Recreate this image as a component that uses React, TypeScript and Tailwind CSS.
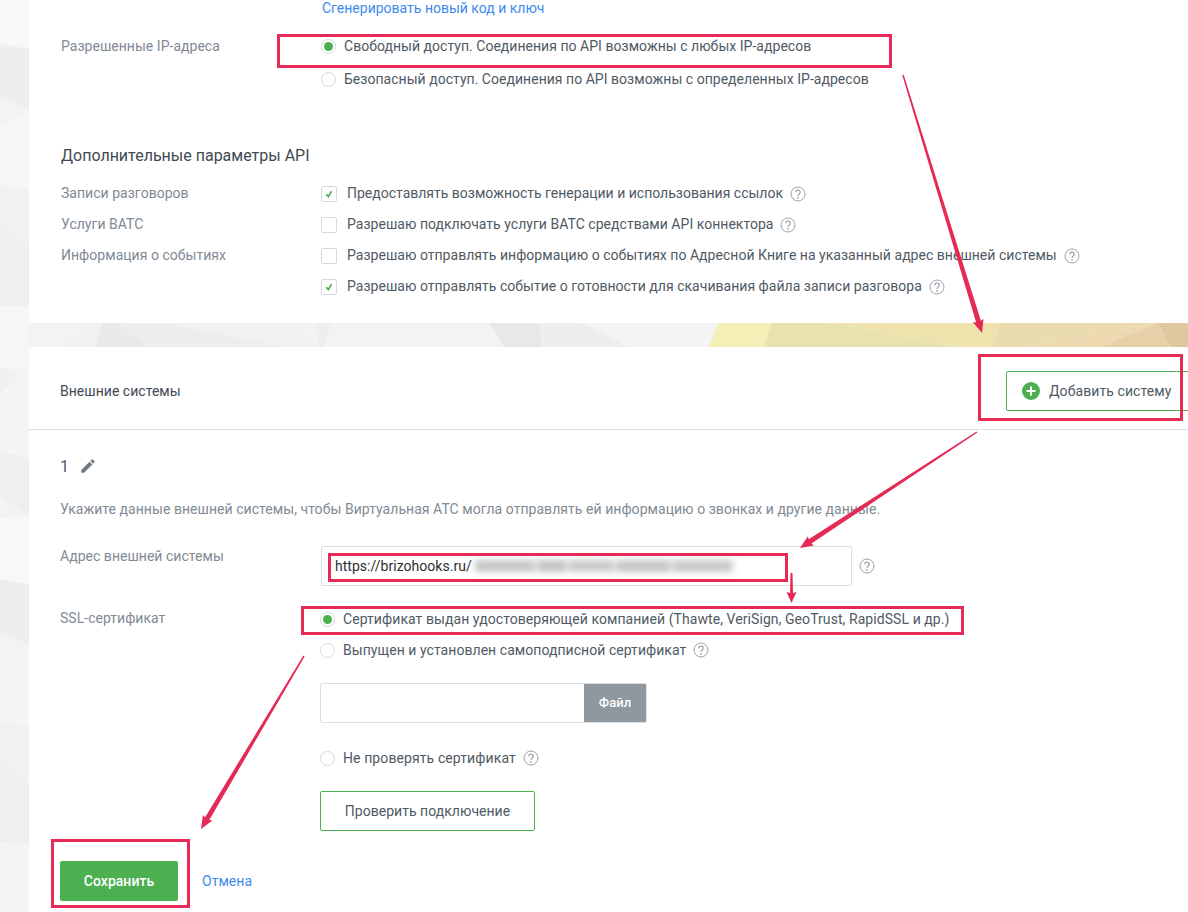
const font = { fontFamily: "Roboto, 'Open Sans', sans-serif" };

const RED = "#e42a55";

function Help({ className = "" }: { className?: string }) {
  return (
    <svg width="16" height="16" viewBox="0 0 16 16" fill="none" className={`shrink-0 ${className}`}>
      <circle cx="8" cy="8" r="7" stroke="#9aa3ab" strokeWidth="1" />
      <path d="M5.8 6.3C5.8 4.9 6.8 4 8 4s2.2.9 2.2 2.2C10.2 8 8 8.1 8 10" stroke="#8f989f" strokeWidth="1.1" fill="none" />
      <circle cx="8" cy="11.9" r=".8" fill="#8f989f" />
    </svg>
  );
}

function Radio({ on = false }: { on?: boolean }) {
  return (
    <span className="flex h-[15px] w-[15px] shrink-0 items-center justify-center rounded-full border border-[#d5dade] bg-white">
      {on && <span className="h-[9px] w-[9px] rounded-full bg-[#4caf50]" />}
    </span>
  );
}

function Check({ on = false }: { on?: boolean }) {
  return (
    <span className="flex h-4 w-4 shrink-0 items-center justify-center rounded-[2px] border border-[#d5dade] bg-white">
      {on && (
        <svg width="10" height="10" viewBox="0 0 10 10" fill="none">
          <path d="M2.4 5.2 4.3 7.6 7.6 2.2" stroke="#4caf50" strokeWidth="1.7" />
        </svg>
      )}
    </span>
  );
}

function OptionRow({ label, text, on, help, tight }: { label?: string; text: string; on?: boolean; help?: boolean; tight?: boolean }) {
  return (
    <div className="flex h-[31px] items-center">
      <div className="w-[260px] shrink-0 text-[#7f8a94]">{label}</div>
      <Check on={on} />
      <span className={`ml-[10px] text-[#4f5a64] ${tight ? "tracking-normal" : ""}`}>{text}</span>
      {help && <Help className="ml-[7px]" />}
    </div>
  );
}

function Gutter() {
  return (
    <svg width="29" height="912" viewBox="0 0 29 912" className="block">
      <rect width="29" height="912" fill="#f5f5f5" />
      <polygon points="0,0 29,0 29,49 0,44" fill="#f8f8f8" />
      <polygon points="0,44 29,49 29,110 0,96" fill="#eeeeee" />
      <polygon points="0,96 29,110 0,128" fill="#f3f3f3" />
      <polygon points="0,128 29,110 29,188 0,187" fill="#f6f6f6" />
      <polygon points="0,187 29,188 29,245 0,227" fill="#f1f1f1" />
      <polygon points="0,227 29,245 29,307 0,305" fill="#efefef" />
      <polygon points="0,305 29,307 29,370 0,367" fill="#f6f6f6" />
      <polygon points="0,367 20,376 0,395" fill="#f0f0f0" />
      <polygon points="0,395 29,373 29,458 0,452" fill="#f5f5f5" />
      <polygon points="0,452 29,458 29,517 0,495" fill="#efefef" />
      <polygon points="0,495 29,517 0,518" fill="#f3f3f3" />
      <polygon points="0,518 29,517 29,584 0,579" fill="#f8f8f8" />
      <polygon points="0,579 29,584 29,645 0,632" fill="#eeeeee" />
      <polygon points="0,632 29,645 0,663" fill="#f3f3f3" />
      <polygon points="0,663 29,645 29,725 0,722" fill="#f5f5f5" />
      <polygon points="0,722 29,725 29,785 0,762" fill="#f1f1f1" />
      <polygon points="0,762 29,785 29,844 0,842" fill="#efefef" />
      <polygon points="0,842 29,844 29,912 0,912" fill="#f4f4f4" />
    </svg>
  );
}

function Band() {
  return (
    <svg width="1159" height="24" viewBox="29 0 1159 24" className="block">
      <rect x="29" width="1159" height="24" fill="#f3f3f3" />
      <polygon points="60,24 102,0 96,24" fill="#f1f1f1" />
      <polygon points="102,0 117,0 148,24 96,24" fill="#e9e9e9" />
      <polygon points="117,0 163,0 284,24 148,24" fill="#ededed" />
      <polygon points="163,0 285,0 320,24 284,24" fill="#f1f1f1" />
      <polygon points="314,0 331,0 323,24 320,24" fill="#eeeeee" />
      <polygon points="489,0 539,0 542,24 504,24" fill="#e8e8e8" />
      <polygon points="539,0 583,0 629,24 542,24" fill="#eeeeee" />
      <polygon points="583,0 718,0 709,24 629,24" fill="#f4f4f4" />
      <polygon points="718,0 772,0 764,24 709,24" fill="#f5f0b8" />
      <polygon points="772,0 830,0 957,24 764,24" fill="#e8e2ae" />
      <polygon points="830,0 1000,0 992,24 957,24" fill="#eee3ad" />
      <polygon points="1000,0 1158,0 1025,24 992,24" fill="#ebdcb0" />
      <polygon points="1025,24 1158,0 1100,24" fill="#edd8b0" />
      <polygon points="1100,24 1158,0 1170,24" fill="#e5d0a8" />
      <polygon points="1158,0 1188,0 1188,24 1170,24" fill="#dfc8a0" />
    </svg>
  );
}

// arrow from a thin tail to a thick head, the way the screenshot tool draws it
function Arrow({ x1, y1, x2, y2, tail, neck, head, len }: { x1: number; y1: number; x2: number; y2: number; tail: number; neck: number; head: number; len: number }) {
  const d = Math.hypot(x2 - x1, y2 - y1);
  const ux = (x2 - x1) / d;
  const uy = (y2 - y1) / d;
  const nx = -uy;
  const ny = ux;
  const bx = x2 - ux * len;
  const by = y2 - uy * len;
  const pts = (list: number[][]) => list.map((p) => p.map((v) => v.toFixed(1)).join(",")).join(" ");
  return (
    <polygon
      fill={RED}
      points={pts([
        [x1 + (nx * tail) / 2, y1 + (ny * tail) / 2],
        [bx + (nx * neck) / 2, by + (ny * neck) / 2],
        [bx + (nx * head) / 2 - ux, by + (ny * head) / 2 - uy],
        [x2, y2],
        [bx - (nx * head) / 2 - ux, by - (ny * head) / 2 - uy],
        [bx - (nx * neck) / 2, by - (ny * neck) / 2],
        [x1 - (nx * tail) / 2, y1 - (ny * tail) / 2],
      ])}
    />
  );
}

function Annotations() {
  const boxes = [
    "left-[277px] top-[34px] h-[34px] w-[615px]",
    "left-[978px] top-[354px] h-[67px] w-[205px]",
    "left-[328px] top-[553px] h-[29px] w-[460px]",
    "left-[301px] top-[606px] h-[29px] w-[663px]",
    "left-[51px] top-[839px] h-[69px] w-[139px]",
  ];
  return (
    <>
      {boxes.map((b) => (
        <div key={b} className={`pointer-events-none absolute border-[3px] border-[#e42a55] ${b}`} />
      ))}
      <svg width="1188" height="912" viewBox="0 0 1188 912" className="pointer-events-none absolute left-0 top-0">
        <Arrow x1={903} y1={75} x2={982} y2={333} tail={1.5} neck={5} head={11} len={12} />
        <Arrow x1={977} y1={432} x2={800} y2={548} tail={1.5} neck={5} head={11} len={12} />
        <Arrow x1={791.5} y1={573} x2={791.5} y2={603} tail={2} neck={3} head={10} len={10} />
        <Arrow x1={304} y1={656} x2={201} y2={829} tail={1.5} neck={5} head={11} len={12} />
      </svg>
    </>
  );
}

export default function App() {
  return (
    <div style={font} className="relative flex h-[912px] w-[1188px] overflow-hidden bg-white text-[14px] tracking-[0.03px] text-[#4f5a64]">
      <div className="w-[29px] shrink-0">
        <Gutter />
      </div>
      <div className="flex min-w-0 flex-1 flex-col">
        <section className="h-[323px] pl-[32px]">
          <div className="flex h-[16px] items-center pl-[261px]">
            <a className="tracking-normal text-[#3d8bec]">Сгенерировать новый код и ключ</a>
          </div>
          <div className="mt-[14px] flex h-[33px] items-center">
            <div className="w-[260px] shrink-0 text-[#7f8a94]">Разрешенные IP-адреса</div>
            <Radio on />
            <span className="ml-[8px]">Свободный доступ. Соединения по API возможны с любых IP-адресов</span>
          </div>
          <div className="flex h-[33px] items-center pl-[260px]">
            <Radio />
            <span className="ml-[8px]">Безопасный доступ. Соединения по API возможны с определенных IP-адресов</span>
          </div>
          <h2 className="mt-[48px] flex h-[24px] items-center text-[16px] tracking-normal text-[#3f4a54]">Дополнительные параметры API</h2>
          <div className="mt-[10px]">
            <OptionRow label="Записи разговоров" on help tight text="Предоставлять возможность генерации и использования ссылок" />
            <OptionRow label="Услуги ВАТС" help text="Разрешаю подключать услуги ВАТС средствами API коннектора" />
            <OptionRow label="Информация о событиях" help text="Разрешаю отправлять информацию о событиях по Адресной Книге на указанный адрес внешней системы" />
            <OptionRow on help text="Разрешаю отправлять событие о готовности для скачивания файла записи разговора" />
          </div>
        </section>

        <Band />

        <section className="flex-1">
          <div className="flex h-[83px] items-center justify-between border-b border-[#dcdfe2] pl-[31px] pt-[6px]">
            <span className="text-[#3f4a54]">Внешние системы</span>
            <button className="-mr-[1px] flex h-[40px] w-[183px] items-center gap-[9px] rounded-l-[2px] border border-[#4caf50] pl-[15px] tracking-[0.08px] text-[#4f5a64]">
              <span className="flex h-[18px] w-[18px] items-center justify-center rounded-full bg-[#4caf50]">
                <svg width="10" height="10" viewBox="0 0 10 10">
                  <path d="M5 0.5v9M0.5 5h9" stroke="#fff" strokeWidth="2" />
                </svg>
              </span>
              Добавить систему
            </button>
          </div>

          <div className="pl-[31px]">
            <div className="mt-[26px] flex h-[20px] items-center gap-[10px] text-[16px]">
              <span className="pt-[1px]">1</span>
              <svg width="18" height="18" viewBox="0 0 24 24" fill="#6f7a84">
                <path d="M3 17.25V21h3.75L17.81 9.94l-3.75-3.75L3 17.25zM20.71 7.04a1 1 0 0 0 0-1.41l-2.34-2.34a1 1 0 0 0-1.41 0l-1.83 1.83 3.75 3.75 1.83-1.83z" />
              </svg>
            </div>
            <p className="mt-[23px] h-[20px] leading-[20px] tracking-[0.05px] text-[#7f8a94]">
              Укажите данные внешней системы, чтобы Виртуальная АТС могла отправлять ей информацию о звонках и другие данные.
            </p>

            <div className="mt-[27px] flex items-center">
              <div className="w-[261px] shrink-0 self-start leading-[20px] text-[#7f8a94]">Адрес внешней системы</div>
              <div className="flex h-[40px] w-[531px] items-center rounded-[2px] border border-[#dcdfe2] pl-[13px] text-[#2b2f33]">
                https://brizohooks.ru/
                <span className="ml-[3px] flex h-[12px] w-[258px] gap-[2px] blur-[3px]">
                  <span className="w-[60px] bg-[#c6c8c9]" />
                  <span className="w-[30px] bg-[#c2c4c5]" />
                  <span className="w-[45px] bg-[#c9cbcc]" />
                  <span className="w-[54px] bg-[#c4c6c7]" />
                  <span className="w-[61px] bg-[#c8cacb]" />
                </span>
              </div>
              <Help className="ml-[7px]" />
            </div>

            <div className="mt-[23px] flex h-[20px] items-center">
              <div className="w-[260px] shrink-0 pb-[2px] text-[#7f8a94]">SSL-сертификат</div>
              <Radio on />
              <span className="ml-[8px] tracking-[0.07px]">Сертификат выдан удостоверяющей компанией (Thawte, VeriSign, GeoTrust, RapidSSL и др.)</span>
            </div>
            <div className="mt-[11px] flex h-[20px] items-center pl-[260px]">
              <Radio />
              <span className="ml-[8px] tracking-[0.05px]">Выпущен и установлен самоподписной сертификат</span>
              <Help className="ml-[7px]" />
            </div>

            <div className="ml-[260px] mt-[23px] flex h-[40px] w-[327px] overflow-hidden rounded-[2px] border border-[#dcdfe2]">
              <div className="flex-1" />
              <div className="flex w-[62px] items-center justify-center bg-[#8f989f] text-[13px] font-medium text-white">Файл</div>
            </div>

            <div className="mt-[25px] flex h-[20px] items-center pl-[260px]">
              <Radio />
              <span className="ml-[8px] tracking-[0.1px]">Не проверять сертификат</span>
              <Help className="ml-[7px]" />
            </div>

            <button className="ml-[260px] mt-[23px] block h-[40px] w-[215px] rounded-[2px] border border-[#4caf50] text-[#4f5a64]">
              Проверить подключение
            </button>

            <div className="mt-[30px] flex items-center">
              <button className="h-[40px] w-[118px] rounded-[2px] bg-[#4caf50] font-medium text-white">Сохранить</button>
              <a className="ml-[24px] text-[#3d8bec]">Отмена</a>
            </div>
          </div>
        </section>
      </div>
      <Annotations />
    </div>
  );
}
